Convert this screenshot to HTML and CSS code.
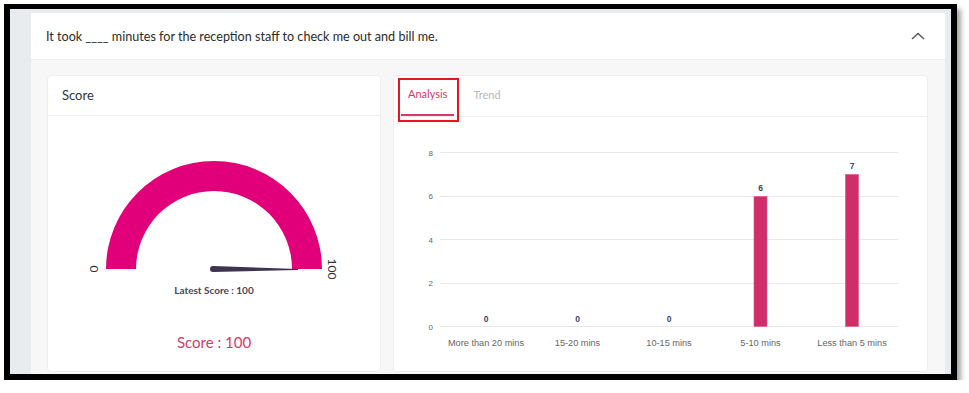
FILE: index.html
```html
<!DOCTYPE html>
<html lang="en">
<head>
    <meta charset="UTF-8">
    <meta name="viewport" content="width=device-width, initial-scale=1.0">
    <title>Question Score</title>
    <link rel="stylesheet" href="styles.css">
</head>
<body>
    <div class="frame">
        <div class="panel">
            <div class="panel-head">
                <p>It took ____ minutes for the reception staff to check me out and bill me.</p>
                <svg class="chevron" width="14" height="8" viewBox="0 0 14 8">
                    <path d="M1 7 L7 1.5 L13 7" fill="none" stroke="#555" stroke-width="1.4"/>
                </svg>
            </div>
            <div class="panel-body">
                <div class="card score-card">
                    <div class="card-head">Score</div>
                    <div class="card-body">
                        <svg class="gauge" width="332" height="190" viewBox="0 0 332 190">
                            <path d="M58 153 A108 108 0 0 1 274 153 L244 153 A78 78 0 0 0 88 153 Z" fill="#e2007a"/>
                            <path d="M165 150 L250 153 L250 154 L165 156 A3 3 0 0 1 165 150 Z" fill="#3d3550"/>
                            <text class="gauge-end" x="42" y="153" text-anchor="middle" transform="rotate(90 42 153)">0</text>
                            <text class="gauge-end" x="280" y="153" text-anchor="middle" transform="rotate(90 280 153)">100</text>
                            <text class="gauge-latest" x="166" y="178" text-anchor="middle">Latest Score : 100</text>
                        </svg>
                        <div class="score-value">Score : 100</div>
                    </div>
                </div>
                <div class="card analysis-card">
                    <div class="tabs">
                        <div class="tab active">Analysis<span class="highlight"></span></div>
                        <div class="tab">Trend</div>
                    </div>
                    <svg class="chart" width="532" height="255" viewBox="0 0 532 255">
                        <g stroke="#e9e9e9" stroke-width="1">
                            <line x1="46" y1="35.5" x2="504" y2="35.5"/>
                            <line x1="46" y1="79.5" x2="504" y2="79.5"/>
                            <line x1="46" y1="122.5" x2="504" y2="122.5"/>
                            <line x1="46" y1="166.5" x2="504" y2="166.5"/>
                            <line x1="46" y1="209.5" x2="504" y2="209.5"/>
                        </g>
                        <g class="y-label" text-anchor="end">
                            <text x="39" y="38.5">8</text>
                            <text x="39" y="82">6</text>
                            <text x="39" y="125.5">4</text>
                            <text x="39" y="169">2</text>
                            <text x="39" y="212.5">0</text>
                        </g>
                        <g fill="#cf2e6a" stroke="#dd5588" stroke-width="0.6">
                            <rect x="360" y="79.5" width="13" height="130"/>
                            <rect x="451.5" y="57.5" width="13" height="152"/>
                        </g>
                        <g class="bar-value" text-anchor="middle">
                            <text x="92" y="205">0</text>
                            <text x="183.5" y="205">0</text>
                            <text x="275" y="205">0</text>
                            <text x="366.5" y="74">6</text>
                            <text x="458" y="52">7</text>
                        </g>
                        <g class="x-label" text-anchor="middle">
                            <text x="92" y="229">More than 20 mins</text>
                            <text x="183.5" y="229">15-20 mins</text>
                            <text x="275" y="229">10-15 mins</text>
                            <text x="366.5" y="229">5-10 mins</text>
                            <text x="458" y="229">Less than 5 mins</text>
                        </g>
                    </svg>
                </div>
            </div>
        </div>
    </div>
</body>
</html>
```

FILE: styles.css
```css
body {
    margin: 0;
    background-color: #fff;
    font-family: Lato, "Open Sans", sans-serif;
    color: #333;
}
.frame {
    box-sizing: border-box;
    width: 953px;
    height: 376px;
    margin: 4px 0 0 4px;
    border: 6px solid #000;
    border-top-width: 5px;
    background-color: #e9ecef;
    box-shadow: 4px 5px 5px rgba(0, 0, 0, 0.35);
    overflow: hidden;
    padding: 4px 6px 0 21px;
}
.panel {
    background-color: #f7f7f7;
    height: 420px;
}
.panel-head {
    height: 46px;
    background-color: #fff;
    border-bottom: 1px solid #ececec;
    display: flex;
    align-items: center;
    justify-content: space-between;
    padding: 0 20px 0 15px;
}
.panel-head p {
    margin: 0;
    font-size: 12.6px;
    color: #2b2b2b;
}
.chevron {
    margin-top: -1px;
}
.panel-body {
    display: flex;
    gap: 12px;
    padding: 15px 16px 0 16px;
}
.card {
    box-sizing: border-box;
    height: 297px;
    background-color: #fff;
    border: 1px solid #eeeeee;
    border-radius: 4px;
}
.score-card {
    width: 334px;
}
.analysis-card {
    width: 535px;
}
.card-head {
    height: 40px;
    display: flex;
    align-items: center;
    padding: 0 0 2px 14px;
    box-sizing: border-box;
    font-size: 13px;
    color: #333;
    border-bottom: 1px solid #efefef;
}
.card-body {
    display: flex;
    flex-direction: column;
    align-items: center;
}
.gauge-end {
    font-size: 12px;
    fill: #333;
}
.gauge-latest {
    font-size: 10px;
    font-weight: bold;
    fill: #4a4556;
}
.score-value {
    margin-top: 27px;
    font-size: 15px;
    color: #d63a68;
}
.tabs {
    height: 40px;
    display: flex;
    gap: 12px;
    padding-left: 7px;
    border-bottom: 1px solid #efefef;
}
.tab {
    position: relative;
    display: flex;
    align-items: center;
    padding: 0 7px 3px;
    font-size: 11px;
    color: #b8b8b8;
}
.tab.active {
    color: #d63a68;
    border-bottom: 2px solid #d63a68;
    margin-bottom: -1px;
    box-sizing: border-box;
    height: 40px;
}
.highlight {
    position: absolute;
    left: -3px;
    right: -5px;
    top: 2px;
    bottom: -8px;
    border: 2px solid #e8141e;
}
.chart {
    display: block;
}
.y-label text {
    font-family: "Liberation Sans", Arial, sans-serif;
    font-size: 8px;
    fill: #666;
}
.bar-value text {
    font-family: "Liberation Sans", Arial, sans-serif;
    font-size: 8.5px;
    font-weight: bold;
    fill: #3d4466;
}
.x-label text {
    font-family: "Liberation Sans", Arial, sans-serif;
    font-size: 9.2px;
    fill: #666;
}
```
